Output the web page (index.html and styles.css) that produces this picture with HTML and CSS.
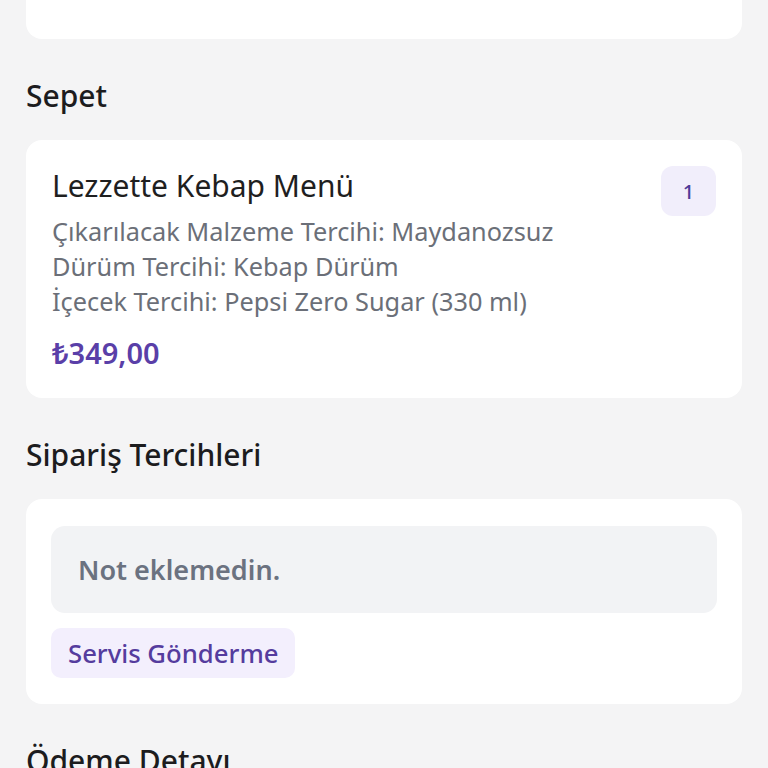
FILE: index.html
```html
<!DOCTYPE html>
<html lang="tr">
<head>
<meta charset="utf-8">
<link rel="stylesheet" href="styles.css">
</head>
<body>
<main class="page">
  <div class="card card-top"></div>

  <h2 class="section-title">Sepet</h2>
  <section class="card cart-card">
    <div class="cart-item">
      <div class="item-info">
        <div class="item-name">Lezzette Kebap Menü</div>
        <div class="item-options">
          <div>Çıkarılacak Malzeme Tercihi: Maydanozsuz</div>
          <div>Dürüm Tercihi: Kebap Dürüm</div>
          <div>İçecek Tercihi: Pepsi Zero Sugar (330 ml)</div>
        </div>
        <div class="item-price">₺349,00</div>
      </div>
      <div class="qty-badge">1</div>
    </div>
  </section>

  <h2 class="section-title">Sipariş Tercihleri</h2>
  <section class="card prefs-card">
    <div class="note-box">Not eklemedin.</div>
    <div class="chip">Servis Gönderme</div>
  </section>

  <h2 class="section-title">Ödeme Detayı</h2>
</main>
</body>
</html>
```
FILE: styles.css
```css
* { box-sizing: border-box; }
html, body { margin: 0; padding: 0; }
body {
  background: #f4f4f5;
  font-family: "Noto Sans", "Open Sans", sans-serif;
  color: #1c1c1e;
  overflow: hidden;
  height: 768px;
}
.page {
  padding: 0 26px;
}
.card {
  background: #ffffff;
  border-radius: 16px;
}
.card-top {
  height: 80px;
  margin-top: -41px;
}
.section-title {
  margin: 0;
  padding: 38px 0 26px;
  font-size: 30px;
  font-weight: 500;
  line-height: 37px;
  color: #1c1c1e;
}
.cart-card {
  padding: 26px 26px 26px 26px;
  height: 258px;
}
.cart-item {
  display: flex;
  justify-content: space-between;
  align-items: flex-start;
}
.item-name {
  font-size: 30px;
  line-height: 40px;
  color: #1f1f1f;
  margin-top: 0;
}
.item-options {
  margin-top: 8px;
  font-size: 25.3px;
  line-height: 35px;
  color: #6b6f78;
}
.item-price {
  margin-top: 16px;
  font-size: 29px;
  line-height: 36px;
  font-weight: 600;
  color: #5a3fa8;
}
.qty-badge {
  width: 55px;
  height: 50px;
  border-radius: 12px;
  background: #f1eefb;
  color: #4f3a98;
  font-size: 20px;
  font-weight: 500;
  display: flex;
  align-items: center;
  justify-content: center;
}
.prefs-card {
  padding: 27px 25px 26px;
  display: flex;
  flex-direction: column;
  align-items: flex-start;
  gap: 15px;
}
.note-box {
  width: 100%;
  height: 87px;
  border-radius: 14px;
  background: #f2f3f5;
  display: flex;
  align-items: center;
  padding: 0 27px;
  font-size: 27px;
  font-weight: 600;
  color: #6b7280;
}
.chip {
  height: 50px;
  padding: 0 17px;
  border-radius: 10px;
  background: #f3effd;
  color: #553c9e;
  font-size: 25.7px;
  font-weight: 500;
  display: flex;
  align-items: center;
}
```
